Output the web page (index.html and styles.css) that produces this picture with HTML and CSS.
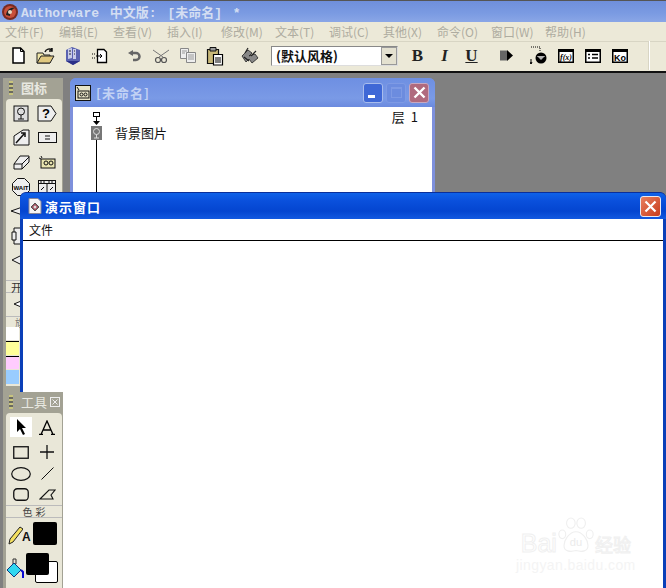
FILE: index.html
```html
<!DOCTYPE html>
<html lang="zh">
<head>
<meta charset="utf-8">
<title>Authorware</title>
<link rel="stylesheet" href="styles.css">
</head>
<body>
<div class="app">
  <header class="titlebar">
    <svg class="app-logo" width="18" height="18" viewBox="0 0 18 18"><circle cx="9" cy="9" r="8" fill="#7a2a20"/><circle cx="9" cy="9" r="6" fill="#c8503a"/><path d="M5 12C6 6 10 4 14 5C11 6 9 9 9 13Z" fill="#222"/><circle cx="9" cy="9" r="2" fill="#e8d8c0"/></svg>
    <span class="app-title">Authorware 中文版: [未命名] *</span>
  </header>
  <nav class="menubar">
    <span>文件(F)</span><span>编辑(E)</span><span>查看(V)</span><span>插入(I)</span><span>修改(M)</span><span>文本(T)</span><span>调试(C)</span><span>其他(X)</span><span>命令(O)</span><span>窗口(W)</span><span>帮助(H)</span>
  </nav>
  <div class="toolbar">
    <span class="tb"><svg width="13" height="17" viewBox="0 0 13 17"><path d="M1 1H8.500L12 4.500V16H1Z" fill="#fff" stroke="#000" stroke-width="1.500"/><path d="M8.500 1V4.500H12" fill="none" stroke="#000"/></svg></span>
    <span class="tb"><svg width="20" height="18" viewBox="0 0 20 18"><path d="M1 16V6H7L8 8H14V16Z" fill="#f0e6a8" stroke="#222"/><path d="M1 16L5 9H18L14 16Z" fill="#e0c880" stroke="#222"/><path d="M9 5C10 2 14 1 16 3M16 1V4H13" fill="none" stroke="#111" stroke-width="1.500"/></svg></span>
    <span class="tb"><svg width="18" height="20" viewBox="0 0 18 20"><path d="M2 4L8 1L16 4V15L9 19L2 15Z" fill="#5a62b0"/><path d="M4 3L8 2V12L4 13ZM9 3H12V13H9Z" fill="#c8cce8"/><path d="M2 15L9 19L16 15" fill="#2a2f88"/><path d="M5 5H7M5 8H7M10 5H11M10 8H11" stroke="#223"/></svg></span>
    <span class="tb"><svg width="17" height="16" viewBox="0 0 17 16"><path d="M6.500 1.500H13L15.500 4V14.500H6.500Z" fill="#fff" stroke="#000" stroke-width="1.300"/><path d="M1 6H2M3 6H4M1 10H2M3 10H4M5 8H11M9 6L11 8L9 10" stroke="#000" fill="none"/></svg></span>
    <span class="tb tb-gap"><svg width="14" height="12" viewBox="0 0 14 12"><path d="M4 3H9A3.500 3.500 0 0 1 9 10H6" fill="none" stroke="#666" stroke-width="2.500"/><path d="M1 3L6 0V6Z" fill="#666"/></svg></span>
    <span class="tb"><svg width="18" height="16" viewBox="0 0 18 16"><path d="M1 2L11 9M17 2L7 9" stroke="#777"/><circle cx="6" cy="12" r="2.500" fill="none" stroke="#555" stroke-width="1.200"/><circle cx="12" cy="12" r="2.500" fill="none" stroke="#555" stroke-width="1.200"/></svg></span>
    <span class="tb"><svg width="18" height="15" viewBox="0 0 18 15"><path d="M1.500 .5H9.500V10.500H1.500Z" fill="#eee" stroke="#888"/><path d="M7.500 4.500H16.500V14.500H7.500Z" fill="#eee" stroke="#888"/><path d="M3 3H8M3 5H6M9 7H15M9 9H15M9 11H15" stroke="#999"/></svg></span>
    <span class="tb"><svg width="18" height="20" viewBox="0 0 18 20"><path d="M1.500 3.500H12.500V17.500H1.500Z" fill="#c8b878" stroke="#111" stroke-width="1.200"/><path d="M4 1.500H10V5H4Z" fill="#999" stroke="#111"/><path d="M7.500 8.500H16.500V19H7.500Z" fill="#fff" stroke="#000" stroke-width="1.200"/><path d="M9 12H15M9 14H15M9 16H15" stroke="#000"/></svg></span>
    <span class="tb tb-gap2"><svg width="20" height="18" viewBox="0 0 20 18"><path d="M2 9L8 3L12 6L9 9L15 7L18 11L12 16L9 12L6 15Z" fill="#888" stroke="#222" stroke-width=".8"/><path d="M8 1L5 6M16 4L11 9M4 10L9 14" stroke="#222" stroke-width="1.200"/></svg></span>
    <div class="combo"><span class="combo-text">(默认风格)</span><span class="combo-btn"><i></i></span></div>
    <span class="tb tb-b">B</span>
    <span class="tb tb-i">I</span>
    <span class="tb tb-u">U</span>
    <span class="tb tb-after"><svg width="13" height="11" viewBox="0 0 13 11"><path d="M0 .5H7V10.500H0Z" fill="#666"/><path d="M7 0L13 5.500L7 11Z" fill="#000"/></svg></span>
    <span class="tb tb-calc"><svg width="18" height="20" viewBox="0 0 18 20"><path d="M1 1H10V6" fill="none" stroke="#000" stroke-dasharray="1 1"/><circle cx="11" cy="12" r="5.500" fill="#000"/><path d="M7 10H15L11 14Z" fill="#fff"/><path d="M8 11H14M9 13H13" stroke="#000" stroke-width=".6"/><path d="M1 13V18M0 16L1 18L2 16" stroke="#000" fill="none"/></svg></span>
    <span class="tb"><svg class="sq" width="16" height="14" viewBox="0 0 16 14"><rect width="16" height="14" fill="#000"/><rect x="1.500" y="3" width="13" height="9.500" fill="#fff"/><text x="8" y="11" text-anchor="middle" class="fx">f(x)</text></svg></span>
    <span class="tb"><svg width="16" height="14" viewBox="0 0 16 14"><rect width="16" height="14" fill="#000"/><rect x="1.500" y="3" width="13" height="9.500" fill="#fff"/><path d="M3 5.500H5M7 5.500H13M3 9H5M7 9H13" stroke="#000" stroke-width="1.500"/></svg></span>
    <span class="tb"><svg width="16" height="14" viewBox="0 0 16 14"><rect width="16" height="14" fill="#000"/><rect x="1.500" y="3" width="13" height="9.500" fill="#fff"/><text x="8" y="11.500" text-anchor="middle" class="ko">Ko</text></svg></span>
    <span class="tb-sep"></span>
  </div>

  <main class="desk">
    <section class="palette palette-icons">
      <div class="pal-title"><i class="grip"></i><span>图标</span></div>
      <div class="pal-body">
        <div class="icon-grid">
          <svg width="16" height="17" viewBox="0 0 16 17"><rect x="1" y="1" width="14" height="15" fill="#ddd" stroke="#111"/><circle cx="8" cy="6.500" r="3.500" fill="none" stroke="#111"/><path d="M8 10V14M5 14H11" stroke="#111"/></svg>
          <svg width="20" height="17" viewBox="0 0 20 17"><path d="M1 1H14L19 8.500L14 16H1Z" fill="#eee" stroke="#111"/><text x="9" y="13" text-anchor="middle" class="qm">?</text></svg>
          <svg width="17" height="17" viewBox="0 0 17 17"><path d="M1 7L10 1H16V16H1Z" fill="#eee" stroke="#111"/><path d="M3 14L11 5M8 4H12V8" fill="none" stroke="#111" stroke-width="1.500"/></svg>
          <svg width="19" height="11" viewBox="0 0 19 11"><rect x=".5" y=".5" width="18" height="10" fill="#eee" stroke="#111"/><path d="M7 4H12M7 7H12" stroke="#111"/></svg>
          <svg width="17" height="15" viewBox="0 0 17 15"><path d="M1 9L7 1H16V7L9 14H1Z" fill="#eee" stroke="#111"/><path d="M1 9H9V14M9 9L16 2" fill="none" stroke="#111"/></svg>
          <svg width="18" height="14" viewBox="0 0 18 14"><rect x="3" y="4" width="14" height="9" fill="#e8e4b0" stroke="#111"/><circle cx="8" cy="8" r="2" fill="none" stroke="#111"/><circle cx="13" cy="8" r="2" fill="none" stroke="#111"/><path d="M3 1L4 3M1 3L3 4" stroke="#111"/></svg>
          <svg width="18" height="18" viewBox="0 0 18 18"><path d="M5.500 .5H12.500L17.500 5.500V12.500L12.500 17.500H5.500L.5 12.500V5.500Z" fill="#eee" stroke="#111"/><text x="9" y="11.500" text-anchor="middle" class="wait">WAIT</text></svg>
          <svg width="18" height="14" viewBox="0 0 18 14"><rect x=".5" y=".5" width="17" height="13" fill="#eee" stroke="#111"/><path d="M.5 3.500H17.500M9 3.500V13.500M3 1V3M6 1V3M11 1V3M14 1V3M3 10L6 7M12 10L15 7" stroke="#111"/></svg>
          <svg width="22" height="16" viewBox="0 0 22 16"><path d="M1 8L21 1V15Z" fill="#eee" stroke="#111"/></svg>
          <span></span>
          <svg width="20" height="18" viewBox="0 0 20 18"><path d="M3 1H17V17H3Z" fill="#eee" stroke="#111"/><path d="M1 5H5V13H1Z" fill="#eee" stroke="#111"/></svg>
          <span></span>
          <svg width="20" height="18" viewBox="0 0 20 18"><path d="M1 9L19 0V18Z" fill="#eee" stroke="#111"/></svg>
          <span></span>
        </div>
        <div class="pal-label">开</div>
        <div class="pal-flag"><svg width="13" height="10" viewBox="0 0 13 10"><path d="M1 5L13 0V10Z" fill="#fff" stroke="#111"/></svg></div>
        <div class="pal-label-b">旗</div>
        <div class="swatches">
          <div class="sw sw-white"></div>
          <div class="sw sw-yellow"></div>
          <div class="sw sw-pink"></div>
          <div class="sw sw-blue"></div>
        </div>
      </div>
    </section>

    <section class="win-design">
      <div class="design-title">
        <svg class="design-icon" width="16" height="16" viewBox="0 0 16 16"><rect x=".5" y=".5" width="15" height="15" fill="#e8e4c8" stroke="#111"/><rect x="3" y="6" width="11" height="7" fill="none" stroke="#111"/><circle cx="6.500" cy="9.500" r="1.500" fill="none" stroke="#111"/><circle cx="10.500" cy="9.500" r="1.500" fill="none" stroke="#111"/><path d="M2 2L4 5" stroke="#111"/></svg>
        <span class="design-name">[未命名]</span>
        <span class="wbtn wbtn-min"><i></i></span>
        <span class="wbtn wbtn-max"><i></i></span>
        <span class="wbtn wbtn-close"><svg width="13" height="13" viewBox="0 0 13 13"><path d="M1.500 1.500L11.500 11.500M11.500 1.500L1.500 11.500" stroke="#fff" stroke-width="2.400"/></svg></span>
      </div>
      <div class="design-body">
        <div class="level">层 1</div>
        <div class="flow">
          <svg width="11" height="14" viewBox="0 0 11 14"><rect x="2.500" y=".5" width="6" height="4" fill="#fff" stroke="#000"/><path d="M5.500 4.500V12" stroke="#000"/><path d="M2 9H9L5.500 13Z" fill="#000"/></svg>
          <div class="flow-row">
            <svg width="11" height="14" viewBox="0 0 11 14"><rect width="11" height="14" fill="#777"/><circle cx="5.500" cy="5.500" r="3" fill="none" stroke="#ddd"/><path d="M5.500 8.500V12M3 12H8" stroke="#ddd"/></svg>
            <span class="flow-name">背景图片</span>
          </div>
          <div class="flow-line"></div>
        </div>
      </div>
    </section>

    <section class="win-present">
      <div class="present-title">
        <svg width="14" height="16" viewBox="0 0 14 16"><path d="M1 .5H10L13 3.500V15.500H1Z" fill="#f4f4f4" stroke="#889"/><path d="M7 5L11 9L7 13L3 9Z" fill="#a05060" stroke="#555"/><circle cx="7" cy="9" r="1.500" fill="#ddd"/></svg>
        <span class="present-name">演示窗口</span>
        <span class="wbtn-x"><svg width="13" height="13" viewBox="0 0 13 13"><path d="M1.500 1.500L11.500 11.500M11.500 1.500L1.500 11.500" stroke="#fff" stroke-width="2.200"/></svg></span>
      </div>
      <div class="present-client">
        <div class="present-menu">文件</div>
        <div class="baidu">
          <div class="baidu-main">
            <span class="b-bai">Bai</span>
            <svg width="36" height="38" viewBox="0 0 42 44"><g fill="none" stroke="#efefef" stroke-width="1.300"><ellipse cx="5" cy="20" rx="4" ry="5"/><ellipse cx="15" cy="7" rx="5" ry="6"/><ellipse cx="27" cy="7" rx="5" ry="6"/><ellipse cx="37" cy="20" rx="4" ry="5"/><path d="M21 17C13 17 7 27 7 33C7 40 14 41 21 39C28 41 35 40 35 33C35 27 29 17 21 17Z"/></g><text x="21" y="34" text-anchor="middle" class="b-du">du</text></svg>
            <span class="b-jy">经验</span>
          </div>
          <div class="b-url">jingyan.baidu.com</div>
        </div>
      </div>
    </section>

    <section class="palette palette-tools">
      <div class="pal-title"><i class="grip"></i><span class="tools-name">工具</span><svg class="pal-x" width="10" height="10" viewBox="0 0 10 10"><rect x=".5" y=".5" width="9" height="9" fill="none" stroke="#eee"/><path d="M2.500 2.500L7.500 7.500M7.500 2.500L2.500 7.500" stroke="#eee"/></svg></div>
      <div class="pal-body tools-body">
        <div class="tool-grid">
          <span class="tool tool-on"><svg width="11" height="16" viewBox="0 0 11 16"><path d="M1 0L10 9H6L9 15L7 16L4 10L1 13Z" fill="#000"/></svg></span>
          <span class="tool tool-a"><svg width="16" height="15" viewBox="0 0 16 15"><path d="M0 14.500H4M12 14.500H16M2 14.500L8 1L14 14.500M4.500 10H11.500" fill="none" stroke="#000" stroke-width="1.300"/></svg></span>
          <span class="tool"><svg width="16" height="13" viewBox="0 0 16 13"><rect x=".75" y=".75" width="14.500" height="11.500" fill="none" stroke="#111" stroke-width="1.300"/></svg></span>
          <span class="tool"><svg width="14" height="14" viewBox="0 0 14 14"><path d="M7 0V14M0 7H14" stroke="#111" stroke-width="1.300"/></svg></span>
          <span class="tool"><svg width="20" height="14" viewBox="0 0 20 14"><ellipse cx="10" cy="7" rx="9.300" ry="6.300" fill="none" stroke="#111" stroke-width="1.200"/></svg></span>
          <span class="tool"><svg width="13" height="13" viewBox="0 0 13 13"><path d="M.5 12.500L12.500 .5" stroke="#111"/></svg></span>
          <span class="tool"><svg width="16" height="13" viewBox="0 0 16 13"><rect x=".75" y=".75" width="14.500" height="11.500" rx="3.500" fill="none" stroke="#111" stroke-width="1.300"/></svg></span>
          <span class="tool"><svg width="17" height="11" viewBox="0 0 17 11"><path d="M1 10L10 1H16L12 6L14 10Z" fill="none" stroke="#111" stroke-width="1.100"/></svg></span>
        </div>
        <div class="color-label">色 彩</div>
        <div class="color-row">
          <svg width="15" height="19" viewBox="0 0 15 19"><path d="M1 18L2 13L12 1L15 3L5 16Z" fill="#f4e060" stroke="#222"/></svg>
          <span class="pen-a">A</span>
          <span class="black-swatch"></span>
        </div>
        <div class="fill-row">
          <svg class="bucket" width="17" height="22" viewBox="0 0 17 22"><path d="M6 2H9V7H6Z" fill="none" stroke="#333"/><path d="M0 13L7 6L14 13L7 20Z" fill="#30d8f0" stroke="#0a3a80"/><path d="M14 13L16 15V21" fill="none" stroke="#0a0ad0" stroke-width="2"/></svg>
          <div class="fill-stack">
            <span class="fill-back"></span>
            <span class="fill-front"></span>
          </div>
        </div>
      </div>
    </section>
  </main>
</div>
</body>
</html>
```

FILE: styles.css
```css
* { box-sizing: border-box; }
html, body { margin: 0; height: 100%; overflow: hidden; }
body { font-family: "Noto Sans CJK SC", "Liberation Sans", sans-serif; font-size: 12px; background: #808080; }
.app { width: 666px; height: 588px; display: flex; flex-direction: column; overflow: hidden; }

.titlebar { height: 22px; flex: none; display: flex; align-items: center; gap: 2px; padding-left: 1px; border-top: 1px solid #555; background: linear-gradient(#6f8fdc, #7b9be2 60%, #8aa6e6); }
.app-title { font-family: "Liberation Mono", "Noto Sans CJK SC", monospace; font-weight: 700; font-size: 13px; color: #d4def2; white-space: pre; word-spacing: 3px; }

.menubar { height: 20px; flex: none; display: flex; gap: 14px; align-items: center; padding-left: 5px; background: #ece9d8; border-bottom: 1px solid #d8d5c4; color: #aeaca0; font-size: 12px; white-space: nowrap; }
.menubar span { width: 40px; }

.toolbar { height: 31px; flex: none; display: flex; align-items: center; padding: 0 0 2px 5px; background: #ece9d8; border-bottom: 2px solid #111; }
.tb { width: 27px; height: 24px; flex: none; display: flex; align-items: center; justify-content: center; font-family: "Liberation Serif", serif; font-weight: 700; font-size: 17px; }
.tb-gap { margin-left: 7px; }
.tb-gap2 { margin-left: 8px; }
.tb-b { margin-left: 6px; color: #222; }
.tb-i { font-style: italic; color: #222; }
.tb-u { text-decoration: underline; color: #222; }
.tb-after { margin-left: 8px; }
.tb-calc { margin-left: 5px; }
.tb-sep { width: 2px; height: 29px; margin-left: 15px; flex: none; background: #d8d5c4; border-right: 1px solid #fff; }
.combo { width: 127px; height: 20px; margin-left: 8px; flex: none; display: flex; justify-content: space-between; background: #fff; border: 1px solid #888; border-right-color: #ddd; border-bottom-color: #ddd; }
.combo-text { font-family: "Noto Sans CJK SC", sans-serif; font-weight: 700; font-size: 13px; line-height: 18px; padding-left: 4px; color: #111; }
.combo-btn { width: 16px; background: #e4e1d0; border: 1px solid #999; display: flex; align-items: center; justify-content: center; }
.combo-btn i { border-left: 4px solid transparent; border-right: 4px solid transparent; border-top: 4px solid #000; }
.fx { font-family: "Liberation Serif", serif; font-style: italic; font-size: 8px; }
.ko { font-family: "Liberation Sans", sans-serif; font-weight: 700; font-size: 9px; }

.desk { position: relative; flex: 1; background: #808080; }

.palette { position: absolute; left: 3px; width: 60px; background: #a3a294; padding: 0 1px 0 3px; }
.palette-icons { top: 5px; height: 314px; }
.palette-tools { top: 319px; height: 200px; }
.pal-title { height: 21px; display: flex; align-items: center; padding: 0 0 2px 3px; color: #e8e8e0; font-weight: 700; font-size: 13px; white-space: nowrap; }
.grip { width: 4px; height: 14px; margin-right: 8px; flex: none; background: repeating-linear-gradient(#c8c47e 0 2px, #6a6a60 2px 4px); }
.pal-x { margin-left: auto; margin-right: 2px; flex: none; }
.tools-name { font-weight: 400; font-size: 13px; }
.pal-body { background: #e9e7d8; border-radius: 4px 4px 0 0; }
.palette-icons .pal-body { height: 287px; }
.icon-grid { display: grid; grid-template-columns: 26px 26px; grid-auto-rows: 24.500px; justify-items: center; align-items: center; padding: 2px 0 0 2px; }
.pal-label { height: 12px; margin-top: 7px; padding-left: 5px; line-height: 12px; font-size: 11px; color: #333; border-top: 1px solid #bbb; }
.pal-flag { height: 24px; padding-left: 7px; display: flex; align-items: center; border-top: 1px solid #bbb; }
.pal-label-b { height: 11px; padding-left: 9px; line-height: 11px; font-size: 10px; color: #777; border-top: 1px solid #bbb; }
.swatches { display: flex; flex-direction: column; gap: 1px; width: 13px; }
.sw { height: 13.500px; }
.sw-white { background: #fff; }
.sw-yellow { background: #ffff99; border-top: 1px solid #000; }
.sw-pink { background: #ffccff; border-top: 1px solid #000; }
.sw-blue { background: #99ccff; }

.win-design { position: absolute; left: 70px; top: 5px; width: 365px; height: 130px; background: #7e90dc; padding: 0 3px 3px; border-radius: 6px 6px 0 0; }
.design-title { height: 29px; display: flex; align-items: center; background: linear-gradient(#6e8fe2, #7a9ae6 70%, #6b8adf); margin: 0 -3px; padding: 0 6px 0 5px; border-radius: 6px 6px 0 0; }
.design-name { margin-left: 5px; font-weight: 700; font-size: 13px; color: #c2d2f4; letter-spacing: 1px; flex: 1; }
.wbtn { width: 20px; height: 20px; margin-left: 3px; border-radius: 3px; display: flex; align-items: center; justify-content: center; border: 1px solid #a8bcec; }
.wbtn-min { background: #3f68d6; align-items: flex-end; padding-bottom: 4px; justify-content: flex-start; padding-left: 4px; }
.wbtn-min i { width: 7px; height: 3px; background: #fff; }
.wbtn-max { background: #6c8cdf; border-color: #7e9ae4; }
.wbtn-max i { width: 11px; height: 11px; border: 1px solid #7e9ae4; border-top-width: 2px; }
.wbtn-close { background: #b06a7e; border-color: #c8a8c0; }
.design-body { position: relative; height: 98px; background: #fff; padding-left: 18px; }
.level { position: absolute; top: 2px; right: 14px; font-size: 13px; line-height: 16px; color: #111; word-spacing: 3px; }
.flow { display: flex; flex-direction: column; padding-top: 5px; }
.flow-row { display: flex; align-items: center; gap: 13px; }
.flow-name { font-size: 13px; line-height: 14px; color: #111; }
.flow-line { width: 1px; height: 55px; margin-left: 5px; background: #000; }

.win-present { position: absolute; left: 20px; top: 119px; right: 0; bottom: 0; background: #0a3fb8; padding: 0 3px; border-radius: 6px 6px 0 0; border-top: 1px solid #0a2f9a; }
.present-title { height: 26px; margin: 0 -3px; display: flex; align-items: center; padding: 0 5px 0 8px; background: linear-gradient(#0f62e8, #0a50dc 30%, #0445d0 70%, #1259e0); border-radius: 6px 6px 0 0; }
.present-name { margin-left: 3px; color: #fff; font-weight: 700; font-size: 13px; letter-spacing: 1px; flex: 1; }
.wbtn-x { width: 21px; height: 21px; border-radius: 3px; border: 1px solid #e8e8f0; background: linear-gradient(135deg, #e88060, #c83c1c); display: flex; align-items: center; justify-content: center; }
.present-client { position: relative; height: 370px; background: #fff; }
.present-menu { height: 22px; padding-left: 6px; line-height: 21px; font-size: 12px; color: #111; border-bottom: 1px solid #000; }

.baidu { position: absolute; left: 493px; top: 298px; display: flex; flex-direction: column; align-items: center; gap: 3px; }
.baidu-main { display: flex; align-items: flex-end; gap: 1px; height: 38px; }
.b-bai { font-family: "Liberation Sans", sans-serif; font-size: 25px; line-height: 24px; color: #fff; -webkit-text-stroke: 1px #f0f0f0; }
.b-du { font-family: "Liberation Sans", sans-serif; font-size: 13px; fill: #ebebeb; }
.b-jy { font-size: 18px; line-height: 22px; color: #fff; -webkit-text-stroke: 1px #f0f0f0; }
.b-url { font-family: "Liberation Sans", sans-serif; font-size: 14px; line-height: 15px; color: #f4f4f4; letter-spacing: .4px; }

.wait { font-family: "Liberation Sans", sans-serif; font-weight: 700; font-size: 6px; }
.qm { font-family: "Liberation Sans", sans-serif; font-weight: 700; font-size: 13px; }

.tools-body { height: 179px; padding-top: 4px; }
.tool-grid { display: grid; grid-template-columns: 26px 26px; grid-template-rows: 24px 22px 21px 21px; padding-left: 2px; justify-items: center; align-items: center; }
.tool { display: flex; align-items: center; justify-content: center; }
.tool-on { width: 22px; height: 20px; background: #fff; align-self: start; }
.tool-a { align-self: start; height: 20px; }
.color-label { height: 13px; text-align: center; line-height: 11px; font-size: 10px; color: #444; border-top: 1px solid #bbb; border-bottom: 1px solid #bbb; word-spacing: 1px; }
.color-row { display: flex; align-items: flex-end; padding: 3px 0 0 2px; height: 27px; }
.pen-a { font-family: "Liberation Sans", sans-serif; font-weight: 700; font-size: 12px; line-height: 14px; margin: 0 2px 1px -1px; color: #111; }
.black-swatch { width: 24px; height: 23px; background: #000; border-radius: 2px; }
.fill-row { display: flex; align-items: flex-end; padding: 8px 0 0 1px; gap: 2px; }
.bucket { margin-bottom: 4px; }
.fill-stack { position: relative; width: 32px; height: 30px; }
.fill-back { position: absolute; right: 0; bottom: 0; width: 23px; height: 22px; background: #fff; border: 1px solid #000; border-radius: 2px; }
.fill-front { position: absolute; left: 0; top: 0; width: 23px; height: 22px; background: #000; border-radius: 2px; }
```
